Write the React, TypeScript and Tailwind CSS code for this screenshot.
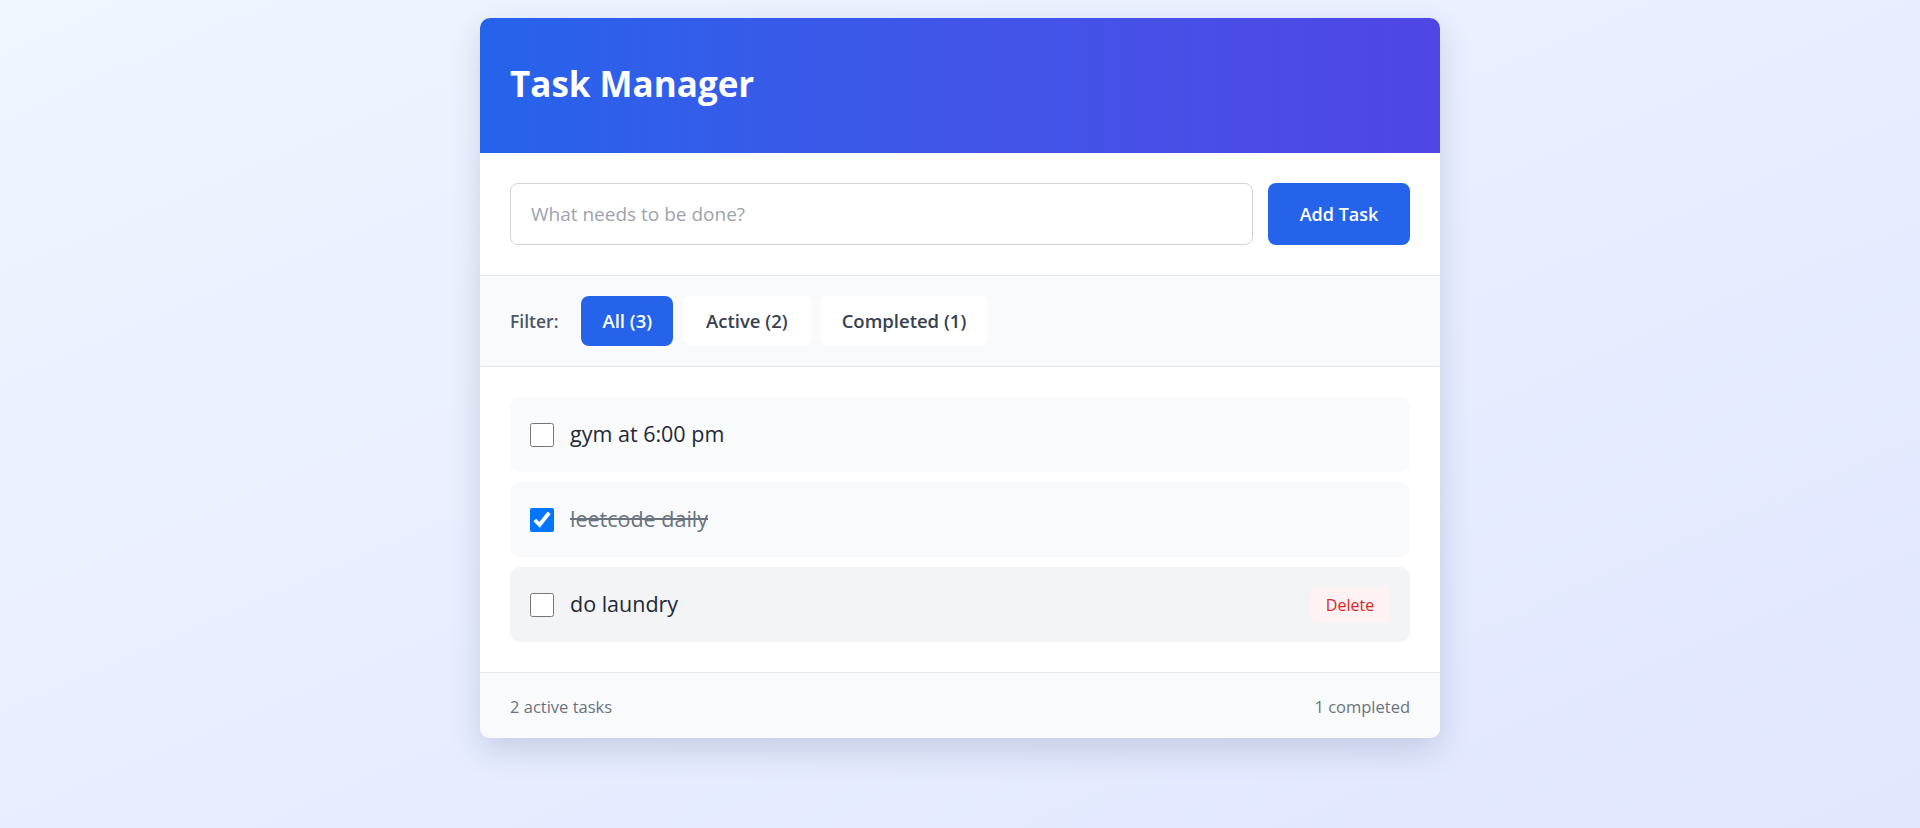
import React from "react";

const font = { fontFamily: '"Open Sans", "Noto Sans", sans-serif' };

type Task = { id: number; text: string; done: boolean; hover?: boolean };

const tasks: Task[] = [
  { id: 1, text: "gym at 6:00 pm", done: false },
  { id: 2, text: "leetcode daily", done: true },
  { id: 3, text: "do laundry", done: false, hover: true },
];

export default function App() {
  return (
    <div
      className="min-h-[828px] w-full bg-gradient-to-br from-[#eff6ff] to-[#e0e7ff] pt-[18px]"
      style={font}
    >
      <div className="mx-auto w-[960px] overflow-hidden rounded-[10px] bg-white shadow-[0_12px_32px_rgba(30,41,80,0.16)]">
        {/* Header */}
        <div className="flex h-[135px] items-center bg-gradient-to-r from-[#2563eb] to-[#4f46e5] px-[30px] pb-[4px]">
          <h1 className="text-[35px] font-bold leading-none text-white">Task Manager</h1>
        </div>

        {/* Input */}
        <div className="flex gap-[15px] border-b border-[#e5e7eb] p-[30px]">
          <input
            type="text"
            placeholder="What needs to be done?"
            className="h-[62px] flex-1 rounded-lg border border-[#d1d5db] bg-white px-[20px] text-[19px] text-[#1f2937] outline-none placeholder:text-[#9ca3af]"
          />
          <button className="h-[62px] w-[142px] rounded-lg bg-[#2563eb] text-[18px] font-semibold text-white">
            Add Task
          </button>
        </div>

        {/* Filter */}
        <div className="flex items-center gap-[10px] border-b border-[#e5e7eb] bg-[#f9fafb] px-[30px] py-[20px]">
          <span className="mr-[13px] text-[17.5px] font-semibold text-[#4b5563]">Filter:</span>
          <button className="h-[50px] rounded-lg bg-[#2563eb] px-[21px] text-[18.5px] font-semibold text-white">
            All (3)
          </button>
          <button className="h-[50px] rounded-lg bg-white px-[23px] text-[18.5px] font-semibold text-[#374151]">
            Active (2)
          </button>
          <button className="h-[50px] rounded-lg bg-white px-[21px] text-[18.5px] font-semibold text-[#374151]">
            Completed (1)
          </button>
        </div>

        {/* List */}
        <div className="flex flex-col gap-[10px] p-[30px]">
          {tasks.map((t) => (
            <div
              key={t.id}
              className={`flex items-center rounded-[10px] px-[20px] py-[20px] ${
                t.hover ? "bg-[#f3f4f6]" : "bg-[#f9fafb]"
              }`}
            >
              <input
                type="checkbox"
                defaultChecked={t.done}
                className="h-[24px] w-[24px] shrink-0"
              />
              <span
                className={`ml-[16px] flex-1 text-[21.5px] ${
                  t.done ? "text-[#6b7280] line-through" : "text-[#1f2937]"
                }`}
              >
                {t.text}
              </span>
              <button
                className={`h-[35px] w-[80px] rounded-md bg-[#fef2f2] text-[16px] text-[#dc2626] ${
                  t.hover ? "opacity-100" : "opacity-0"
                }`}
              >
                Delete
              </button>
            </div>
          ))}
        </div>

        {/* Footer */}
        <div className="flex h-[66px] items-center justify-between border-t border-[#e5e7eb] bg-[#f9fafb] px-[30px] pt-[3px] text-[16.5px] text-[#6b7280]">
          <span>2 active tasks</span>
          <span>1 completed</span>
        </div>
      </div>
    </div>
  );
}
